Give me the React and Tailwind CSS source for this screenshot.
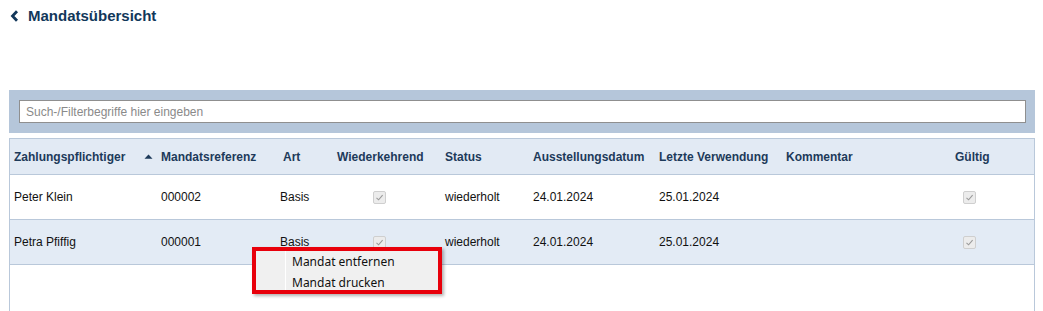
import React from "react";

function Check() {
  return (
    <div className="w-[13px] h-[13px] border border-[#cfcfcf] bg-[#ececec] flex items-center justify-center rounded-[2px]">
      <svg width="9" height="9" viewBox="0 0 9 9">
        <path d="M1.5 4.8 L3.6 6.8 L7.6 2.2" fill="none" stroke="#9a9a9a" strokeWidth="1.1" />
      </svg>
    </div>
  );
}

const cols = [
  { w: "w-[147px]", pl: "pl-[4px]" },
  { w: "w-[122px]", pl: "pl-[4px]" },
  { w: "w-[54px]", pl: "pl-[4px]" },
  { w: "w-[108px]", pl: "pl-[4px]" },
  { w: "w-[88px]", pl: "pl-[4px]" },
  { w: "w-[126px]", pl: "pl-[4px]" },
  { w: "w-[127px]", pl: "pl-[4px]" },
  { w: "w-[169px]", pl: "pl-[4px]" },
  { w: "w-[82px]", pl: "pl-[4px]" },
];

function Row({ data, bg }) {
  return (
    <div className={`flex items-center h-[45px] border-b border-[#b9c8da] ${bg}`}>
      <div className="w-[147px] pl-[4px]">{data[0]}</div>
      <div className="w-[122px] pl-[4px]">{data[1]}</div>
      <div className="w-[54px] pl-[1px]">Basis</div>
      <div className="w-[108px] pl-[40px]"><Check /></div>
      <div className="w-[88px] pl-[4px]">wiederholt</div>
      <div className="w-[126px] pl-[4px]">24.01.2024</div>
      <div className="w-[127px] pl-[4px]">25.01.2024</div>
      <div className="w-[169px]"></div>
      <div className="w-[82px] pl-[12px]"><Check /></div>
    </div>
  );
}

export default function App() {
  const headers = ["Zahlungspflichtiger", "Mandatsreferenz", "Art", "Wiederkehrend", "Status", "Ausstellungsdatum", "Letzte Verwendung", "Kommentar", "Gültig"];
  return (
    <div className="relative w-[1043px] h-[311px] bg-white overflow-hidden text-[12px] text-[#111]" style={{ fontFamily: '"Liberation Sans", Arial, sans-serif' }}>
      <div className="h-[90px] pt-[7px] pl-[10px] flex items-start">
        <div className="flex items-center gap-[9px] text-[#12375a] font-bold text-[15px] h-[18px]">
          <svg width="9" height="12" viewBox="0 0 9 12">
            <path d="M7 1.2 L2.5 6 L7 10.8" fill="none" stroke="#12375a" strokeWidth="2.8" />
          </svg>
          <span>Mandatsübersicht</span>
        </div>
      </div>
      <div className="ml-[9px] w-[1026px] h-[43px] bg-[#b5c6da] pt-[10px] pl-[10px]">
        <div className="w-[1007px] h-[23px] bg-white border border-[#8f8f8f] flex items-center pl-[6px] text-[#8a8a8a]">
          Such-/Filterbegriffe hier eingeben
        </div>
      </div>
      <div className="ml-[9px] mt-[5px] w-[1026px] h-[200px] border-l border-r border-[#b9c8da]">
        <div className="flex items-center h-[37px] bg-[#e2eaf4] border-t border-b border-[#b9c8da] font-bold text-[#1d3a5a]">
          {headers.map((h, i) => (
            <div key={h} className={`${cols[i].w} ${cols[i].pl} flex items-center`}>
              <span>{h}</span>
              {i === 0 && (
                <svg className="ml-[19px]" width="9" height="5" viewBox="0 0 9 5">
                  <path d="M0.5 4.8 L4.5 0.6 L8.5 4.8 Z" fill="#1d3a5a" />
                </svg>
              )}
            </div>
          ))}
        </div>
        <Row data={["Peter Klein", "000002"]} bg="bg-white" />
        <Row data={["Petra Pfiffig", "000001"]} bg="bg-[#e3ebf5]" />
      </div>
      <div className="absolute left-[252px] top-[247px] w-[190px] h-[47px] border-[4px] border-[#e8000b] bg-[#f0f0f0] shadow-[2px_2px_3px_rgba(0,0,0,0.3)]" style={{ fontFamily: '"Noto Sans", "Open Sans", sans-serif' }}>
        <div className="absolute left-[29px] top-0 bottom-0 w-px bg-[#e0e0e0] border-r border-white"></div>
        <div className="pl-[36px] text-[12px] text-[#111] leading-[21px]">
          <div>Mandat entfernen</div>
          <div>Mandat drucken</div>
        </div>
      </div>
    </div>
  );
}
